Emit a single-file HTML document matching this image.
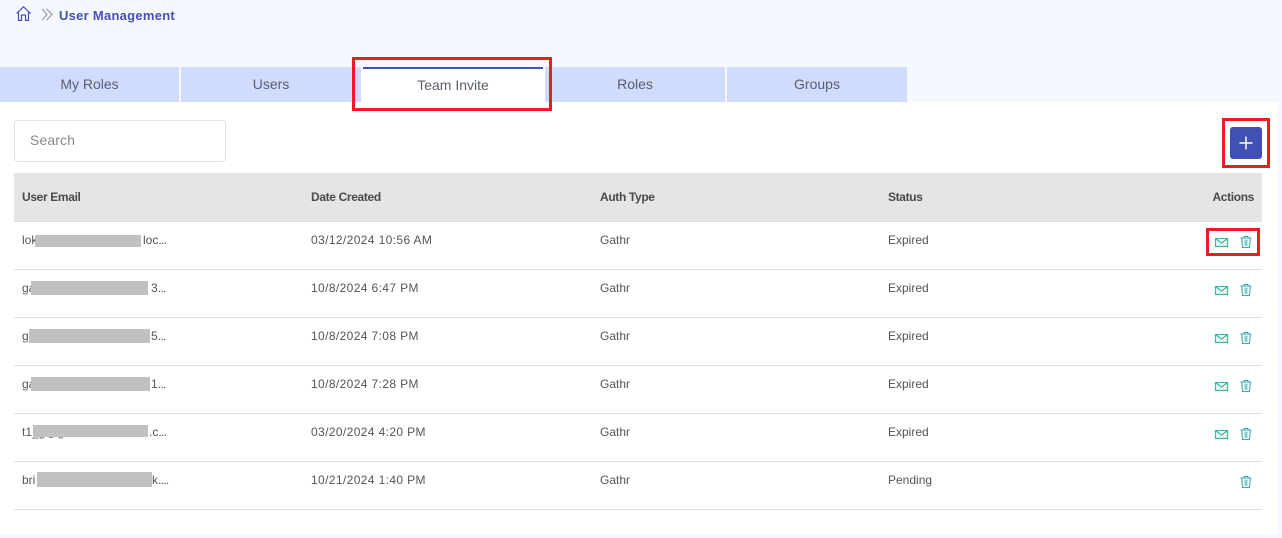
<!DOCTYPE html>
<html>
<head>
<meta charset="utf-8">
<style>
html,body{margin:0;padding:0;}
body{width:1282px;height:538px;position:relative;overflow:hidden;background:#f5f8ff;font-family:"Liberation Sans",sans-serif;color:#555;}
.a{position:absolute;}
.panel{left:0;top:102px;width:1278px;height:432px;background:#fff;}
.tab{position:absolute;top:67px;height:35px;background:#d0dcfd;color:#5a5f6e;font-size:14px;line-height:35px;text-align:center;letter-spacing:0;}
.hd{position:absolute;top:173px;left:14px;width:1248px;height:48px;background:#e5e5e5;}
.th{position:absolute;top:190px;font-size:12px;line-height:14px;font-weight:bold;color:#4a4a4a;letter-spacing:-.35px;}
.td{position:absolute;font-size:12px;line-height:14px;color:#555;white-space:nowrap;}
.d{letter-spacing:.38px;}
.td i{font-style:normal;letter-spacing:-.7px;}
.line{position:absolute;left:14px;width:1248px;height:1px;background:#dedede;}
.mask{position:absolute;height:12px;background:#c1c1c1;}
.red{position:absolute;border:3px solid #ed1c24;box-sizing:border-box;}
svg{position:absolute;overflow:visible;}
</style>
</head>
<body>
<div class="a panel"></div>

<svg style="left:16px;top:6px" width="15" height="15" viewBox="0 0 15 15" fill="none" stroke="#4450b5" stroke-width="1.2"><path d="M.5 7.5L7.5.8L14.5 7.5M2.5 6V14.4H5.5V9H9.5V14.4H12.5V6"/></svg>
<svg style="left:41px;top:8px" width="12" height="13" viewBox="0 0 12 13" fill="none" stroke="#a8a8b4" stroke-width="1.4"><path d="M1 .8L6 6.5L1 12.2M5.5 .8L11 6.5L5.5 12.2"/></svg>
<div class="a" style="left:59px;top:8px;font-size:13px;line-height:15px;font-weight:bold;color:#4450b5;letter-spacing:.27px;">User Management</div>

<div class="tab" style="left:0;width:179px;">My Roles</div>
<div class="tab" style="left:181px;width:180px;">Users</div>
<div class="tab" style="left:361px;width:184px;background:#fff;line-height:37px;">Team Invite</div>
<div class="a" style="left:363px;top:67px;width:180px;height:2px;background:#3f51b5;"></div>
<div class="tab" style="left:545px;width:180px;">Roles</div>
<div class="tab" style="left:727px;width:180px;">Groups</div>
<div class="red" style="left:352px;top:57px;width:200px;height:54px;"></div>

<div class="a" style="left:14px;top:120px;width:212px;height:42px;box-sizing:border-box;border:1px solid #e2e2e2;border-radius:4px;background:#fff;padding-left:15px;line-height:39px;font-size:14px;color:#8a8a8a;letter-spacing:.1px;">Search</div>

<div class="a" style="left:1230px;top:127px;width:32px;height:32px;border-radius:3px;background:#3f51b5;"></div>
<svg style="left:1239px;top:136px" width="14" height="14" viewBox="0 0 14 14" stroke="#fff" stroke-width="1.5"><path d="M7 0.5V13.5M0.5 7H13.5"/></svg>
<div class="red" style="left:1222px;top:118px;width:48px;height:50px;"></div>

<div class="hd"></div>
<div class="th" style="left:22px;">User Email</div>
<div class="th" style="left:311px;">Date Created</div>
<div class="th" style="left:600px;">Auth Type</div>
<div class="th" style="left:888px;">Status</div>
<div class="th" style="right:28px;">Actions</div>

<div class="line" style="top:221px"></div>
<div class="line" style="top:269px"></div>
<div class="line" style="top:317px"></div>
<div class="line" style="top:365px"></div>
<div class="line" style="top:413px"></div>
<div class="line" style="top:461px"></div>
<div class="line" style="top:509px"></div>

<div class="td" style="left:22px;top:233px">lok</div><div class="mask" style="left:35px;top:235px;width:106px"></div><div class="td" style="left:143px;top:233px">loc<i>...</i></div>
<div class="td d" style="left:311px;top:233px">03/12/2024 10:56 AM</div><div class="td" style="left:600px;top:233px">Gathr</div><div class="td" style="left:888px;top:233px">Expired</div>

<div class="td" style="left:22px;top:281px">ga</div><div class="mask" style="left:31px;top:281px;width:117px;height:14px"></div><div class="td" style="left:151px;top:281px">3<i>...</i></div>
<div class="td d" style="left:311px;top:281px">10/8/2024 6:47 PM</div><div class="td" style="left:600px;top:281px">Gathr</div><div class="td" style="left:888px;top:281px">Expired</div>

<div class="td" style="left:22px;top:329px">g</div><div class="mask" style="left:29px;top:329px;width:121px;height:14px"></div><div class="td" style="left:151px;top:329px">5<i>...</i></div>
<div class="td d" style="left:311px;top:329px">10/8/2024 7:08 PM</div><div class="td" style="left:600px;top:329px">Gathr</div><div class="td" style="left:888px;top:329px">Expired</div>

<div class="td" style="left:22px;top:377px">ga</div><div class="mask" style="left:31px;top:377px;width:119px;height:14px"></div><div class="td" style="left:151px;top:377px">1<i>...</i></div>
<div class="td d" style="left:311px;top:377px">10/8/2024 7:28 PM</div><div class="td" style="left:600px;top:377px">Gathr</div><div class="td" style="left:888px;top:377px">Expired</div>

<div class="td" style="left:22px;top:425px">t1_g@g</div><div class="mask" style="left:33px;top:425px;width:115px"></div><div class="td" style="left:149px;top:425px">.c<i>...</i></div>
<div class="td d" style="left:311px;top:425px">03/20/2024 4:20 PM</div><div class="td" style="left:600px;top:425px">Gathr</div><div class="td" style="left:888px;top:425px">Expired</div>

<div class="td" style="left:22px;top:473px">bri</div><div class="mask" style="left:37px;top:472px;width:115px;height:15px"></div><div class="td" style="left:152px;top:473px">k<i>....</i></div>
<div class="td d" style="left:311px;top:473px">10/21/2024 1:40 PM</div><div class="td" style="left:600px;top:473px">Gathr</div><div class="td" style="left:888px;top:473px">Pending</div>

<!-- mail icons -->
<svg style="left:1215px;top:238px" width="13" height="9" viewBox="0 0 13 9" fill="#e8f6f3" stroke="#45b3a3" stroke-width="1.2"><path d="M.5.5H12.5V8.5H.5ZM.5.5L6.5 5L12.5.5"/></svg>
<svg style="left:1215px;top:286px" width="13" height="9" viewBox="0 0 13 9" fill="#e8f6f3" stroke="#45b3a3" stroke-width="1.2"><path d="M.5.5H12.5V8.5H.5ZM.5.5L6.5 5L12.5.5"/></svg>
<svg style="left:1215px;top:334px" width="13" height="9" viewBox="0 0 13 9" fill="#e8f6f3" stroke="#45b3a3" stroke-width="1.2"><path d="M.5.5H12.5V8.5H.5ZM.5.5L6.5 5L12.5.5"/></svg>
<svg style="left:1215px;top:382px" width="13" height="9" viewBox="0 0 13 9" fill="#e8f6f3" stroke="#45b3a3" stroke-width="1.2"><path d="M.5.5H12.5V8.5H.5ZM.5.5L6.5 5L12.5.5"/></svg>
<svg style="left:1215px;top:430px" width="13" height="9" viewBox="0 0 13 9" fill="#e8f6f3" stroke="#45b3a3" stroke-width="1.2"><path d="M.5.5H12.5V8.5H.5ZM.5.5L6.5 5L12.5.5"/></svg>

<!-- trash icons -->
<svg style="left:1240px;top:236px" width="12" height="12" viewBox="0 0 12 12" fill="none" stroke="#3aa9ad" stroke-width="1.1"><path d="M.5 2H11.5M4 1.5V.5H8V1.5M1.8 2L2.5 11.5H9.5L10.2 2"/><path d="M5 4H7V9.5H5Z" fill="#5cb8bb" stroke="#9ad4d6"/></svg>
<svg style="left:1240px;top:284px" width="12" height="12" viewBox="0 0 12 12" fill="none" stroke="#3aa9ad" stroke-width="1.1"><path d="M.5 2H11.5M4 1.5V.5H8V1.5M1.8 2L2.5 11.5H9.5L10.2 2"/><path d="M5 4H7V9.5H5Z" fill="#5cb8bb" stroke="#9ad4d6"/></svg>
<svg style="left:1240px;top:332px" width="12" height="12" viewBox="0 0 12 12" fill="none" stroke="#3aa9ad" stroke-width="1.1"><path d="M.5 2H11.5M4 1.5V.5H8V1.5M1.8 2L2.5 11.5H9.5L10.2 2"/><path d="M5 4H7V9.5H5Z" fill="#5cb8bb" stroke="#9ad4d6"/></svg>
<svg style="left:1240px;top:380px" width="12" height="12" viewBox="0 0 12 12" fill="none" stroke="#3aa9ad" stroke-width="1.1"><path d="M.5 2H11.5M4 1.5V.5H8V1.5M1.8 2L2.5 11.5H9.5L10.2 2"/><path d="M5 4H7V9.5H5Z" fill="#5cb8bb" stroke="#9ad4d6"/></svg>
<svg style="left:1240px;top:428px" width="12" height="12" viewBox="0 0 12 12" fill="none" stroke="#3aa9ad" stroke-width="1.1"><path d="M.5 2H11.5M4 1.5V.5H8V1.5M1.8 2L2.5 11.5H9.5L10.2 2"/><path d="M5 4H7V9.5H5Z" fill="#5cb8bb" stroke="#9ad4d6"/></svg>
<svg style="left:1240px;top:476px" width="12" height="12" viewBox="0 0 12 12" fill="none" stroke="#3aa9ad" stroke-width="1.1"><path d="M.5 2H11.5M4 1.5V.5H8V1.5M1.8 2L2.5 11.5H9.5L10.2 2"/><path d="M5 4H7V9.5H5Z" fill="#5cb8bb" stroke="#9ad4d6"/></svg>

<div class="red" style="left:1206px;top:228px;width:54px;height:28px;"></div>
</body>
</html>
